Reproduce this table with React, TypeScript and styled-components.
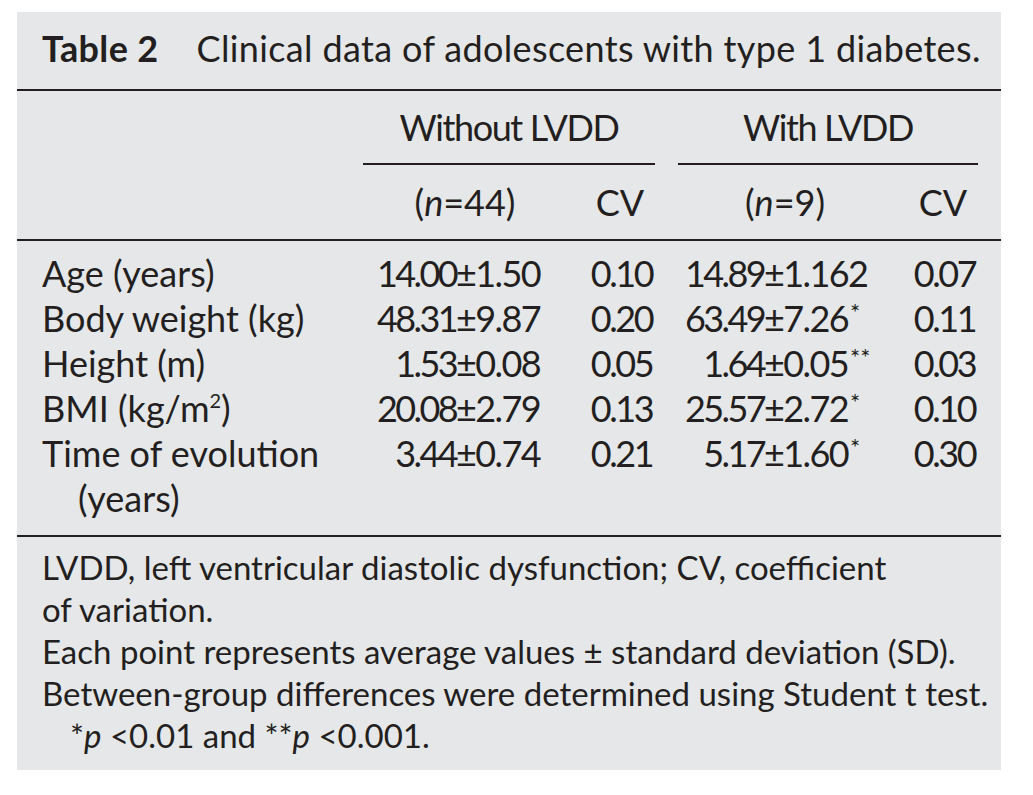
import styled, { createGlobalStyle } from "styled-components";

const INK = "#231f20";
const COLS = "346px 222px 70px 23px 230px 70px 23px";

const GlobalStyle = createGlobalStyle`
  html, body {
    margin: 0;
    padding: 0;
    background: #ffffff;
  }
  body {
    font-family: Lato, "Open Sans", sans-serif;
    color: ${INK};
  }
`;

const Card = styled.div`
  margin: 12px 0 0 17px;
  width: 984px;
  background: #e6e7e9;
  font-size: 36px;
  line-height: 45px;
`;

const Caption = styled.div`
  display: flex;
  gap: 38px;
  height: 79px;
  box-sizing: border-box;
  padding: 14px 25px 0;
  border-bottom: 2px solid ${INK};
  white-space: nowrap;
  letter-spacing: 0.35px;
`;

const Label = styled.span`
  font-weight: 700;
`;

const HeadRow = styled.div<{ $h: number; $rule?: boolean }>`
  display: grid;
  grid-template-columns: ${COLS};
  height: ${(p) => p.$h}px;
  box-sizing: border-box;
  border-bottom: ${(p) => (p.$rule ? `2px solid ${INK}` : "none")};
`;

const GroupHead = styled.div<{ $col: string }>`
  grid-column: ${(p) => p.$col};
  display: flex;
  align-items: center;
  justify-content: center;
  border-bottom: 2px solid ${INK};
  letter-spacing: -1.4px;
`;

const SubHead = styled.div<{ $col: number; $shift?: number }>`
  grid-column: ${(p) => p.$col};
  display: flex;
  align-items: center;
  justify-content: center;
  padding-right: ${(p) => p.$shift ?? 0}px;
`;

const Body = styled.div`
  padding: 10px 0 14px;
  border-bottom: 2px solid ${INK};
`;

const Row = styled.div`
  display: grid;
  grid-template-columns: ${COLS};
  align-items: start;
`;

const RowLabel = styled.div`
  padding-left: 61px;
  text-indent: -36px;
`;

const Value = styled.div<{ $col: number }>`
  grid-column: ${(p) => p.$col};
  display: flex;
  white-space: nowrap;
`;

const Mean = styled.span<{ $w: number }>`
  width: ${(p) => p.$w}px;
  text-align: right;
  flex-shrink: 0;
  letter-spacing: -2.6px;
`;

const Spread = styled.span`
  letter-spacing: -1.6px;
`;

const Cv = styled.div<{ $col: number }>`
  grid-column: ${(p) => p.$col};
  text-align: center;
  letter-spacing: -2.4px;
  padding-left: 3px;
`;

const Star = styled.sup`
  font-size: 24px;
  line-height: 0;
  vertical-align: 11px;
  letter-spacing: 0;
  margin-left: 2px;
`;

const Sup = styled.sup`
  font-size: 20px;
  line-height: 0;
  vertical-align: 14px;
`;

const Notes = styled.div`
  padding: 9px 25px 14px;
  font-size: 33px;
  line-height: 42px;
`;

const NoteLine = styled.div<{ $indent?: boolean }>`
  padding-left: ${(p) => (p.$indent ? "28px" : "0")};
  white-space: nowrap;
`;

type Data = {
  label: React.ReactNode;
  a: [string, string];
  cvA: string;
  c: [string, string];
  stars: string;
  cvC: string;
};

const rows: Data[] = [
  { label: "Age (years)", a: ["14.00", "1.50"], cvA: "0.10", c: ["14.89", "1.162"], stars: "", cvC: "0.07" },
  { label: "Body weight (kg)", a: ["48.31", "9.87"], cvA: "0.20", c: ["63.49", "7.26"], stars: "*", cvC: "0.11" },
  { label: "Height (m)", a: ["1.53", "0.08"], cvA: "0.05", c: ["1.64", "0.05"], stars: "**", cvC: "0.03" },
  {
    label: (
      <>
        BMI (kg/m<Sup>2</Sup>)
      </>
    ),
    a: ["20.08", "2.79"],
    cvA: "0.13",
    c: ["25.57", "2.72"],
    stars: "*",
    cvC: "0.10",
  },
  { label: "Time of evolution (years)", a: ["3.44", "0.74"], cvA: "0.21", c: ["5.17", "1.60"], stars: "*", cvC: "0.30" },
];

export default function App() {
  return (
    <>
      <GlobalStyle />
      <Card>
        <Caption>
          <Label>Table 2</Label>
          <span>Clinical data of adolescents with type 1 diabetes.</span>
        </Caption>

        <HeadRow $h={74}>
          <GroupHead $col="2 / 4">Without LVDD</GroupHead>
          <GroupHead $col="5 / 7">With LVDD</GroupHead>
        </HeadRow>
        <HeadRow $h={76} $rule>
          <SubHead $col={2} $shift={18}>
            <span>
              (<i>n</i>=44)
            </span>
          </SubHead>
          <SubHead $col={3}>CV</SubHead>
          <SubHead $col={5} $shift={16}>
            <span>
              (<i>n</i>=9)
            </span>
          </SubHead>
          <SubHead $col={6}>CV</SubHead>
        </HeadRow>

        <Body>
          {rows.map((r, i) => (
            <Row key={i}>
              <RowLabel>{r.label}</RowLabel>
              <Value $col={2}>
                <Mean $w={93}>{r.a[0]}</Mean>
                <Spread>±{r.a[1]}</Spread>
              </Value>
              <Cv $col={3}>{r.cvA}</Cv>
              <Value $col={5}>
                <Mean $w={86}>{r.c[0]}</Mean>
                <Spread>
                  ±{r.c[1]}
                  {r.stars && <Star>{r.stars}</Star>}
                </Spread>
              </Value>
              <Cv $col={6}>{r.cvC}</Cv>
            </Row>
          ))}
        </Body>

        <Notes>
          <NoteLine>LVDD, left ventricular diastolic dysfunction; CV, coefficient</NoteLine>
          <NoteLine>of variation.</NoteLine>
          <NoteLine>Each point represents average values ± standard deviation (SD).</NoteLine>
          <NoteLine>Between-group differences were determined using Student t test.</NoteLine>
          <NoteLine $indent>
            *<i>p</i> &lt;0.01 and **<i>p</i> &lt;0.001.
          </NoteLine>
        </Notes>
      </Card>
    </>
  );
}
